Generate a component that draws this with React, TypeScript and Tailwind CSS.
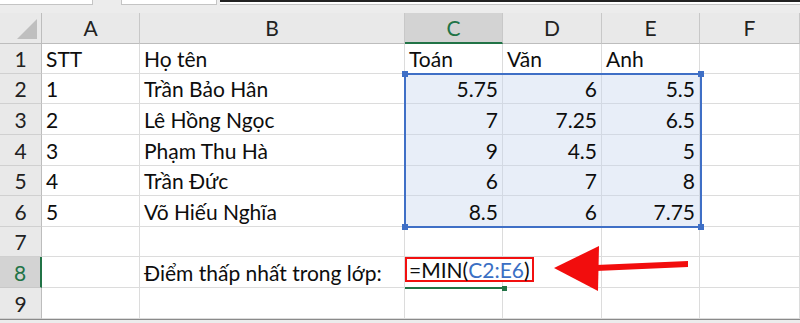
const cols = ["A", "B", "C", "D", "E", "F"];

type Cell = { v: string; num?: boolean };

const rows: Cell[][] = [
  [{ v: "STT" }, { v: "Họ tên" }, { v: "Toán" }, { v: "Văn" }, { v: "Anh" }, { v: "" }],
  [{ v: "1" }, { v: "Trần Bảo Hân" }, { v: "5.75", num: true }, { v: "6", num: true }, { v: "5.5", num: true }, { v: "" }],
  [{ v: "2" }, { v: "Lê Hồng Ngọc" }, { v: "7", num: true }, { v: "7.25", num: true }, { v: "6.5", num: true }, { v: "" }],
  [{ v: "3" }, { v: "Phạm Thu Hà" }, { v: "9", num: true }, { v: "4.5", num: true }, { v: "5", num: true }, { v: "" }],
  [{ v: "4" }, { v: "Trần Đức" }, { v: "6", num: true }, { v: "7", num: true }, { v: "8", num: true }, { v: "" }],
  [{ v: "5" }, { v: "Võ Hiếu Nghĩa" }, { v: "8.5", num: true }, { v: "6", num: true }, { v: "7.75", num: true }, { v: "" }],
  [{ v: "" }, { v: "" }, { v: "" }, { v: "" }, { v: "" }, { v: "" }],
  [{ v: "" }, { v: "Điểm thấp nhất trong lớp:" }, { v: "" }, { v: "" }, { v: "" }, { v: "" }],
  [{ v: "" }, { v: "" }, { v: "" }, { v: "" }, { v: "" }, { v: "" }],
];

// rows 2..6, columns C..E are the referenced range
function inRange(r: number, c: number) {
  return r >= 1 && r <= 5 && c >= 2 && c <= 4;
}

export default function App() {
  return (
    <div className="relative w-[800px] h-[323px] overflow-hidden bg-white font-['Lato','Open_Sans',sans-serif] text-[21px] text-[#0d0d0d]">
      {/* name box / formula bar edges */}
      <div className="flex h-[13px] bg-[#ececec]">
        <div className="w-[93px] h-[5px] bg-white border-b border-r border-[#c4c4c4]" />
        <div className="ml-[28px] w-[96px] h-[5px] bg-white border-b border-x border-[#c4c4c4]" />
        <div className="ml-[3px] flex-1 h-[5px] bg-white border-t-2 border-[#222] border-b border-b-[#c4c4c4]" />
      </div>

      <div className="grid grid-cols-[42px_98px_265px_98px_99px_98px_100px] grid-rows-[31px_30px_30px_31px_31px_30px_31px_30px_31px_31px]">
        {/* corner */}
        <div className="relative bg-[#e9e9e9] border-r border-b border-[#bdbdbd]">
          <div className="absolute right-[4px] bottom-[4px] w-0 h-0 border-l-[20px] border-l-transparent border-b-[20px] border-b-[#bfbfbf]" />
        </div>
        {cols.map((c) =>
          c === "C" ? (
            <div key={c} className="flex items-center justify-center bg-[#d3d3d3] border-r border-[#c8c8c8] border-b-2 border-b-[#217346] text-[#217346] pt-[1px]">
              {c}
            </div>
          ) : (
            <div key={c} className="flex items-center justify-center bg-[#e9e9e9] border-r border-b border-[#c8c8c8] border-b-[#bdbdbd] text-[#222]">
              {c}
            </div>
          )
        )}

        {rows.map((row, r) => (
          <>
            {r === 7 ? (
              <div key={`h${r}`} className="flex items-end justify-center pb-[2px] bg-[#d3d3d3] border-b border-[#c8c8c8] border-r-2 border-r-[#217346] text-[#217346] leading-[24px]">
                {r + 1}
              </div>
            ) : (
              <div key={`h${r}`} className="flex items-end justify-center pb-[2px] bg-[#e9e9e9] border-b border-[#d0d0d0] border-r border-r-[#bdbdbd] text-[#222] leading-[24px]">
                {r + 1}
              </div>
            )}
            {row.map((cell, c) => (
              <div
                key={`${r}-${c}`}
                className={`flex items-end px-[4px] pb-[2px] leading-[24px] whitespace-nowrap border-r border-b ${
                  cell.num ? "justify-end" : "justify-start"
                } ${inRange(r, c) ? "bg-[#e8eef8] border-[#d3d9e3]" : "border-[#dcdcdc]"}`}
              >
                {cell.v}
              </div>
            ))}
          </>
        ))}
      </div>

      {/* bottom edge */}
      <div className="h-[4px] border-t border-[#8a8a8a] bg-[#ececec]" />

      {/* reference range outline C2:E6 */}
      <div className="absolute left-[404px] top-[73px] w-[298px] h-[155px] border-2 border-[#3f6fc6]">
        <span className="absolute -left-[4px] -top-[4px] w-[6px] h-[6px] bg-[#3f6fc6]" />
        <span className="absolute -right-[4px] -top-[4px] w-[6px] h-[6px] bg-[#3f6fc6]" />
        <span className="absolute -left-[4px] -bottom-[4px] w-[6px] h-[6px] bg-[#3f6fc6]" />
        <span className="absolute -right-[4px] -bottom-[4px] w-[6px] h-[6px] bg-[#3f6fc6]" />
      </div>

      {/* active cell C8 */}
      <div className="absolute left-[405px] top-[287px] w-[99px] h-[2px] bg-[#217346]">
        <span className="absolute -right-[3px] -top-[1px] w-[5px] h-[5px] bg-[#217346]" />
      </div>

      {/* formula being edited */}
      <div className="absolute left-[405px] top-[257px] w-[129px] h-[25px] border-2 border-[#f21010] bg-white flex items-center pl-[2px] leading-[20px] text-[21px] text-[#0d0d0d]">
        =MIN(<span className="text-[#3a6fc4]">C2:E6</span>)
      </div>

      {/* arrow */}
      <svg className="absolute left-0 top-0" width="800" height="323" viewBox="0 0 800 323">
        <polygon points="554,268 599,246 598,291" fill="#f20d0d" />
        <polygon points="596,265 688,261 688,267 596,271" fill="#f20d0d" />
      </svg>
    </div>
  );
}
